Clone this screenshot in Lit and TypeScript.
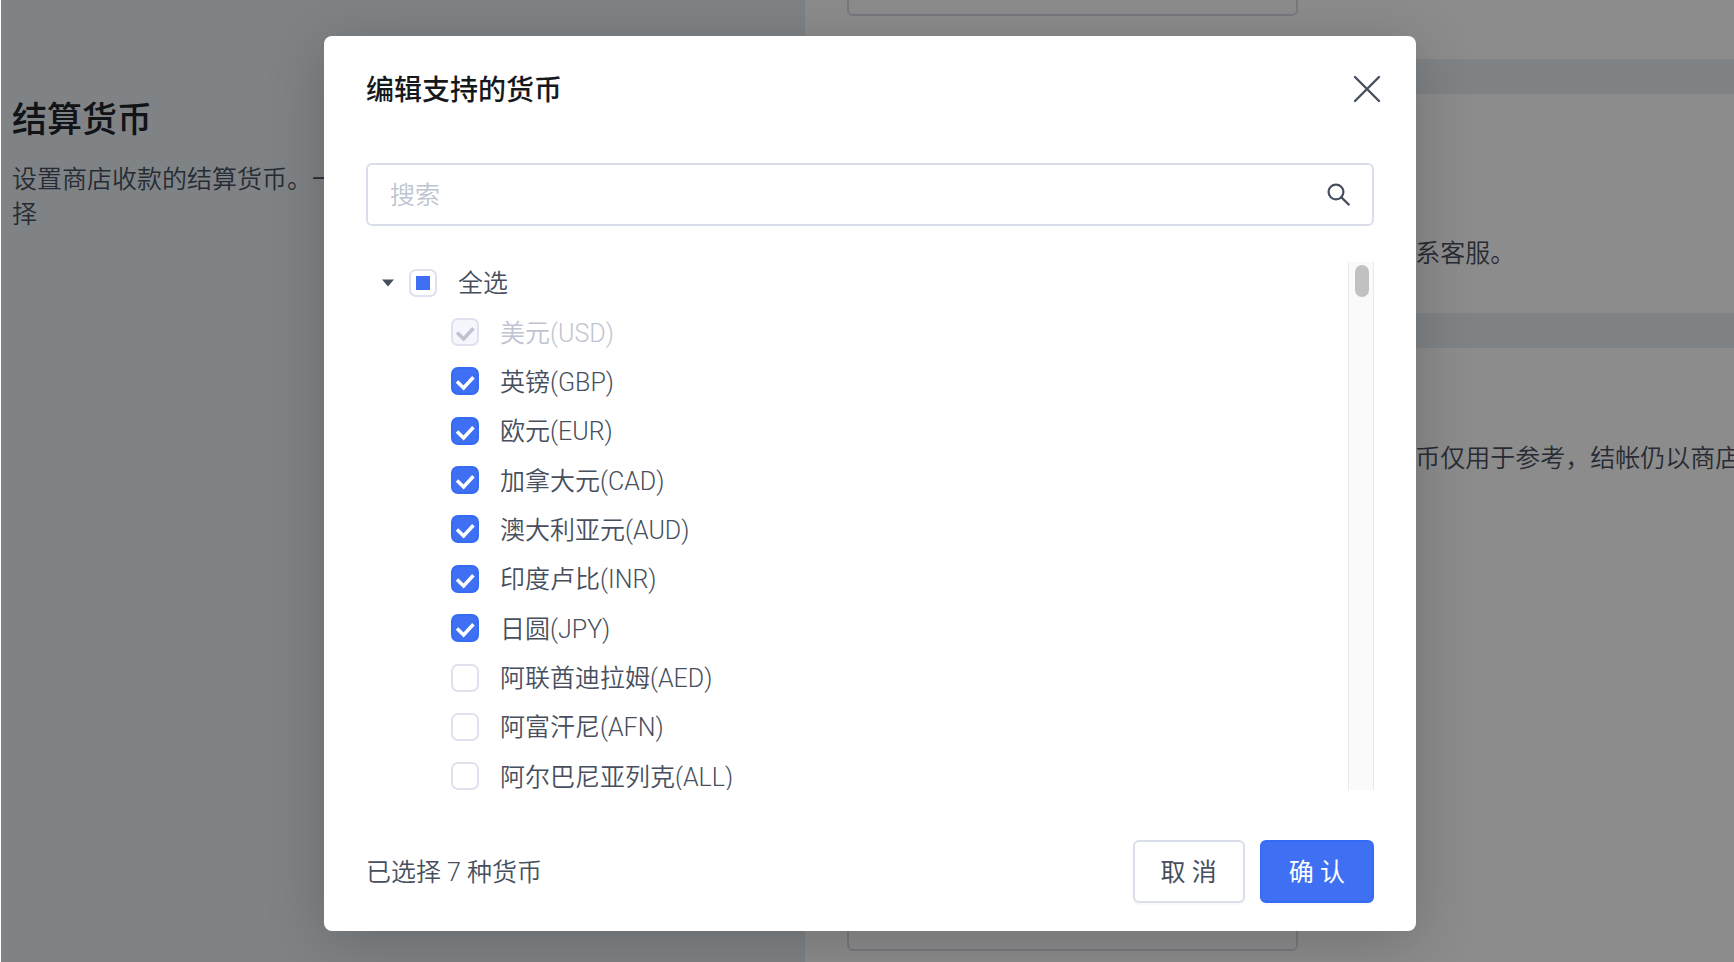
import { LitElement, html, css, svg, nothing } from "lit";
import { customElement, property, state } from "lit/decorators.js";

interface Currency {
  code: string;
  name: string;
  checked: boolean;
  disabled?: boolean;
}

const CURRENCIES: Currency[] = [
  { code: "USD", name: "美元", checked: true, disabled: true },
  { code: "GBP", name: "英镑", checked: true },
  { code: "EUR", name: "欧元", checked: true },
  { code: "CAD", name: "加拿大元", checked: true },
  { code: "AUD", name: "澳大利亚元", checked: true },
  { code: "INR", name: "印度卢比", checked: true },
  { code: "JPY", name: "日圆", checked: true },
  { code: "AED", name: "阿联酋迪拉姆", checked: false },
  { code: "AFN", name: "阿富汗尼", checked: false },
  { code: "ALL", name: "阿尔巴尼亚列克", checked: false },
];

/** Tick box with a label; shows a tick, a filled square or nothing. */
@customElement("check-item")
export class CheckItem extends LitElement {
  @property() label = "";
  @property({ type: Boolean }) checked = false;
  @property({ type: Boolean }) mixed = false;
  @property({ type: Boolean }) disabled = false;

  static styles = css`
    :host {
      display: block;
    }
    .item {
      display: flex;
      align-items: center;
      gap: 21px;
      cursor: pointer;
      white-space: nowrap;
    }
    .text {
      padding-top: 2px;
    }
    .box {
      display: grid;
      width: 28px;
      height: 28px;
    }
    .box > * {
      grid-area: 1 / 1;
    }
    .input {
      appearance: none;
      box-sizing: border-box;
      width: 28px;
      height: 28px;
      margin: 0;
      border: 2px solid #dfe2ee;
      border-radius: 7px;
      background: #fff;
      cursor: inherit;
    }
    .input:checked {
      border-color: #356cf6;
      background: #3f6ff3;
    }
    .mark {
      width: 28px;
      height: 28px;
      color: #fff;
      pointer-events: none;
    }
    .square {
      width: 14px;
      height: 14px;
      place-self: center;
      background: #3f6ff3;
      pointer-events: none;
    }
    .disabled {
      color: #bfc4d2;
      cursor: not-allowed;
    }
    .disabled .input {
      border-color: #dfe2ee;
      background: #f6f7fc;
    }
    .disabled .mark {
      color: #bfc3d1;
    }
  `;

  private onChange(e: Event) {
    this.dispatchEvent(
      new CustomEvent("toggle", { detail: (e.target as HTMLInputElement).checked })
    );
  }

  render() {
    return html`
      <label class="item ${this.disabled ? "disabled" : ""}">
        <span class="box">
          <input
            class="input"
            type="checkbox"
            .checked=${this.checked}
            .indeterminate=${this.mixed}
            ?disabled=${this.disabled}
            @change=${this.onChange}
          />
          ${this.mixed ? html`<span class="square"></span>` : nothing}
          ${this.checked
            ? html`<svg class="mark" viewBox="0 0 28 28" aria-hidden="true">
                <path
                  d="M6 14.4 12.6 21 22.4 10.2"
                  fill="none"
                  stroke="currentColor"
                  stroke-width="3.5"
                />
              </svg>`
            : nothing}
        </span>
        <span class="text">${this.label}</span>
      </label>
    `;
  }
}

const closeIcon = svg`<path d="M2 2 26 26M26 2 2 26" fill="none" stroke="currentColor" stroke-width="2.4" stroke-linecap="round"/>`;
const searchIcon = svg`<g fill="none" stroke="currentColor" stroke-width="2.2" stroke-linecap="round"><circle cx="9" cy="9" r="7.4"/><path d="M14.4 14.4 21.8 21.6"/></g>`;

@customElement("app-root")
export class AppRoot extends LitElement {
  @state() private currencies = CURRENCIES;
  @state() private open = true;
  @state() private expanded = true;
  @state() private query = "";

  static styles = css`
    :host {
      display: block;
      position: relative;
      min-height: 100vh;
      overflow: hidden;
      font-family: Roboto, "Noto Sans CJK SC", sans-serif;
      font-size: 25px;
      font-weight: 350;
      line-height: 35px;
      color: #474f5e;
      background: #fff;
    }
    h1,
    h2,
    p {
      margin: 0;
    }
    button {
      font: inherit;
      color: inherit;
      cursor: pointer;
    }

    /* Settings page */
    .page {
      display: grid;
      grid-template-columns: 804fr 929fr;
      height: 100vh;
      margin-left: 1px;
      background: #e7eff4;
    }
    .intro {
      padding: 95px 12px 0 11px;
    }
    .intro-title {
      margin-bottom: 15px;
      font-size: 35px;
      line-height: 52px;
      font-weight: 500;
      color: #1f2329;
    }
    .cards {
      display: grid;
      grid-template-rows: 59px 219px 1fr;
      gap: 35px;
      min-width: 0;
    }
    .card {
      display: flex;
      flex-direction: column;
      padding: 0 0 0 42px;
      overflow: hidden;
      background: #fff;
      white-space: nowrap;
    }
    .card-body {
      padding-top: 142px;
    }
    .card-last {
      padding-top: 93px;
    }
    .field {
      box-sizing: border-box;
      width: 451px;
      height: 63px;
      border: 2px solid #d9dcea;
      border-radius: 6px;
      background: #fff;
    }
    .field-top {
      margin-top: -47px;
    }
    .field-bottom {
      margin-top: 412px;
    }

    /* Dialog */
    .mask {
      position: absolute;
      inset: 0 0 0 1px;
      display: flex;
      align-items: flex-start;
      justify-content: center;
      padding: 36px 16px 0 21px;
      background: rgba(0, 0, 0, 0.45);
    }
    .modal {
      box-sizing: border-box;
      width: min(1092px, 100%);
      padding: 32px 42px 28px;
      border-radius: 8px;
      background: #fff;
      box-shadow: 0 10px 60px rgba(0, 0, 0, 0.2);
    }
    .head {
      display: flex;
      align-items: center;
      justify-content: space-between;
      height: 42px;
      margin: 0 -7px 53px 0;
    }
    .title {
      padding-top: 4px;
      font-size: 28px;
      line-height: 42px;
      font-weight: 500;
      color: #16181c;
    }
    .close {
      display: grid;
      padding: 0;
      border: 0;
      background: none;
    }
    .close svg {
      width: 28px;
      height: 28px;
    }
    .search {
      display: flex;
      align-items: center;
      box-sizing: border-box;
      height: 63px;
      padding: 0 21px 0 22px;
      border: 2px solid #d9deea;
      border-radius: 6px;
    }
    .search input {
      flex: 1;
      min-width: 0;
      padding: 2px 0 0;
      border: 0;
      outline: 0;
      background: none;
      font: inherit;
      color: inherit;
    }
    .search input::placeholder {
      color: #bfc4d2;
      opacity: 1;
    }
    .search svg {
      width: 24px;
      height: 24px;
    }
    .list {
      display: flex;
      align-items: flex-end;
      height: 532px;
      margin: 32px 0 50px;
    }
    .tree {
      flex: 1;
      height: 100%;
      overflow-y: auto;
      scrollbar-width: none;
    }
    .rows {
      display: grid;
      grid-auto-rows: 1fr;
      align-items: center;
      height: 543px;
    }
    .rows-short {
      grid-auto-rows: 49px;
    }
    .parent {
      display: flex;
      align-items: center;
    }
    .caret {
      display: grid;
      place-items: center;
      width: 43px;
      height: 28px;
      padding: 0;
      border: 0;
      background: none;
    }
    .caret svg {
      width: 12px;
      height: 8px;
    }
    .child {
      padding-left: 85px;
    }
    .rail {
      box-sizing: border-box;
      width: 26px;
      height: 528px;
      padding: 3px 4px 0 6px;
      border: solid #e9e9e9;
      border-width: 0 1px;
      background: #fafafa;
    }
    .thumb {
      height: 32px;
      border-radius: 8px;
      background: #c1c1c1;
    }
    .foot {
      display: flex;
      align-items: center;
      gap: 15px;
    }
    .count {
      flex: 1;
      padding-top: 2px;
    }
    .btn {
      box-sizing: border-box;
      height: 63px;
      padding: 2px 26px 0;
      border: 2px solid #d9deea;
      border-radius: 6px;
      background: #fff;
      font-weight: 400;
      box-shadow: 0 2px 2px rgba(0, 0, 0, 0.03);
    }
    .primary {
      padding: 2px 27px 0;
      border-color: #356cf6;
      background: #3f6ff3;
      color: #fff;
    }
  `;

  private setOne(code: string, checked: boolean) {
    this.currencies = this.currencies.map((c) => (c.code === code ? { ...c, checked } : c));
  }

  private setAll(checked: boolean) {
    this.currencies = this.currencies.map((c) => (c.disabled ? c : { ...c, checked }));
  }

  private renderModal() {
    const count = this.currencies.filter((c) => c.checked).length;
    const all = count === this.currencies.length;
    const shown = this.currencies.filter((c) => `${c.name}(${c.code})`.includes(this.query));
    const full = this.expanded && shown.length === this.currencies.length;
    return html`
      <div class="mask">
        <section class="modal" role="dialog" aria-modal="true" aria-labelledby="modal-title">
          <header class="head">
            <h2 class="title" id="modal-title">编辑支持的货币</h2>
            <button class="close" aria-label="关闭" @click=${() => (this.open = false)}>
              <svg viewBox="0 0 28 28" aria-hidden="true">${closeIcon}</svg>
            </button>
          </header>
          <label class="search">
            <input
              type="text"
              placeholder="搜索"
              aria-label="搜索"
              @input=${(e: Event) => (this.query = (e.target as HTMLInputElement).value)}
            />
            <svg viewBox="0 0 24 24" aria-hidden="true">${searchIcon}</svg>
          </label>
          <div class="list">
            <div class="tree">
              <div class="rows ${full ? "" : "rows-short"}">
                <div class="parent">
                  <button
                    class="caret"
                    aria-label="展开"
                    aria-expanded=${this.expanded ? "true" : "false"}
                    @click=${() => (this.expanded = !this.expanded)}
                  >
                    <svg viewBox="0 0 12 8" aria-hidden="true">
                      <path d="M0 .5H12L6 7.5Z" fill="currentColor" />
                    </svg>
                  </button>
                  <check-item
                    label="全选"
                    .checked=${all}
                    .mixed=${count > 0 && !all}
                    @toggle=${(e: CustomEvent) => this.setAll(e.detail)}
                  ></check-item>
                </div>
                ${this.expanded
                  ? shown.map(
                      (c) => html`<check-item
                        class="child"
                        label=${`${c.name}(${c.code})`}
                        .checked=${c.checked}
                        .disabled=${!!c.disabled}
                        @toggle=${(e: CustomEvent) => this.setOne(c.code, e.detail)}
                      ></check-item>`
                    )
                  : nothing}
              </div>
            </div>
            <div class="rail" aria-hidden="true"><div class="thumb"></div></div>
          </div>
          <footer class="foot">
            <p class="count">已选择 ${count} 种货币</p>
            <button class="btn" @click=${() => (this.open = false)}>取 消</button>
            <button class="btn primary" @click=${() => (this.open = false)}>确 认</button>
          </footer>
        </section>
      </div>
    `;
  }

  render() {
    return html`
      <main class="page">
        <section class="intro">
          <h1 class="intro-title">结算货币</h1>
          <p>设置商店收款的结算货币。一旦商店产生交易后将无法修改，请谨慎选择</p>
        </section>
        <div class="cards">
          <section class="card"><div class="field field-top"></div></section>
          <section class="card card-body">
            <p>商店 已有交易记录， 暂时无法修改， 如需帮助请联系客服。</p>
          </section>
          <section class="card card-last">
            <p>顾客可在 商店中切换货币浏览商品价格， 该 展示货币仅用于参考，结帐仍以商店结算货币为准</p>
            <div class="field field-bottom"></div>
          </section>
        </div>
      </main>
      ${this.open ? this.renderModal() : nothing}
    `;
  }
}
